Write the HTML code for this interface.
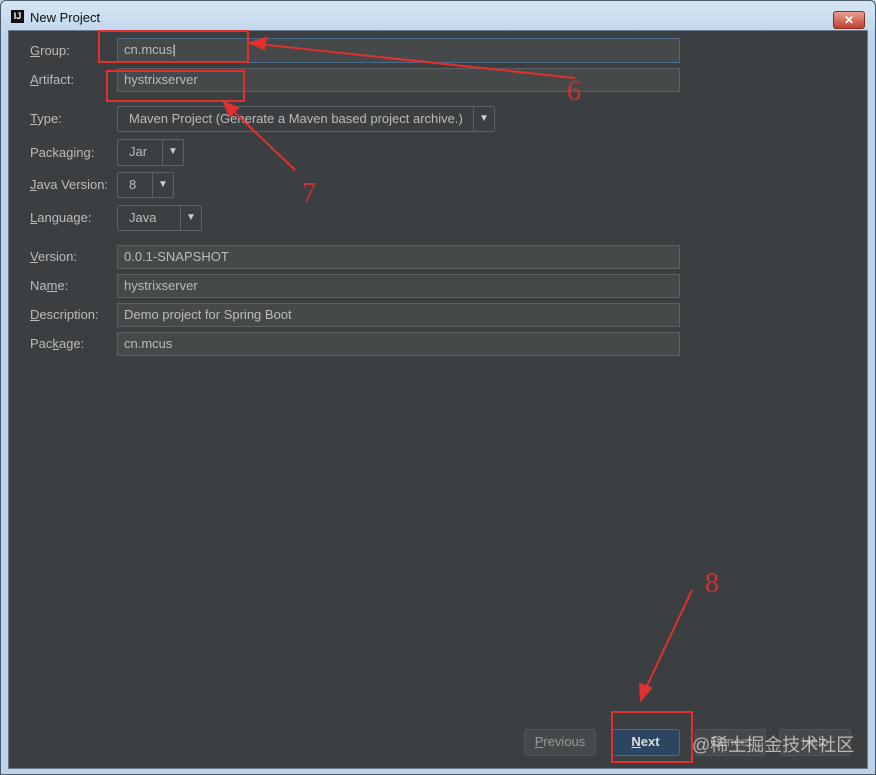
<!DOCTYPE html>
<html><head><style>
body{margin:0;width:876px;height:775px;overflow:hidden;background:#bcd3ea;font-family:"Liberation Sans","Noto Sans CJK SC",sans-serif;position:relative}
.a{position:absolute}
.win{left:0;top:0;width:874px;height:773px;border:1px solid #4a5a6a;background:linear-gradient(#d6e5f3,#bcd3ea 40px);border-radius:6px 6px 0 0}
.content{left:8px;top:30px;width:858px;height:737px;background:#3c3f41;border:1px solid #6a7a8a}
.lbl{color:#bbbbbb;font-size:13px;left:30px}
.f{border:1px solid #5e6163;background:#45494a;color:#bbbbbb;font-size:13px;box-sizing:border-box;padding-left:6px;line-height:22px}
.cb{border:1px solid #5e6163;background:#3c3f41;color:#bbbbbb;font-size:13px;box-sizing:border-box;padding-left:11px;line-height:24px;border-radius:2px}
.arr{position:absolute;right:0;top:0;bottom:0;width:20px;border-left:1px solid #5e6163;text-align:center;font-size:10px;color:#ccc}
.btn{border:1px solid #555;background:#46494b;color:#999;font-size:13px;text-align:center;line-height:24px;box-sizing:border-box;border-radius:3px;height:27px;top:729px}
.red{border:2px solid #e03030;box-sizing:border-box}
.num{color:#d03030;font-family:"Liberation Serif",serif;font-size:28px}
</style></head><body>
<div class="a win"></div>
<div class="a" style="left:11px;top:10px;width:13px;height:13px;background:#111;color:#fff;font-size:9px;font-weight:bold;line-height:13px;text-align:center">IJ</div>
<div class="a" style="left:30px;top:10px;font-size:13px;color:#111">New Project</div>
<div class="a" style="left:833px;top:11px;width:30px;height:16px;background:linear-gradient(#e8a090,#c04030);border:1px solid #803020;border-radius:3px;color:#fff;font-size:12px;font-weight:bold;text-align:center;line-height:16px">✕</div>
<div class="a content"></div>

<div class="a lbl" style="top:43px"><u>G</u>roup:</div>
<div class="a f" style="left:117px;top:38px;width:563px;height:25px;border-color:#4a6a8a">cn.mcus<span style="color:#ddd">|</span></div>
<div class="a lbl" style="top:72px"><u>A</u>rtifact:</div>
<div class="a f" style="left:117px;top:68px;width:563px;height:24px">hystrixserver</div>
<div class="a lbl" style="top:111px"><u>T</u>ype:</div>
<div class="a cb" style="left:117px;top:106px;width:378px;height:26px">Maven Project (Generate a Maven based project archive.)<div class="arr">▼</div></div>
<div class="a lbl" style="top:145px">Packa<u>g</u>ing:</div>
<div class="a cb" style="left:117px;top:139px;width:67px;height:27px">Jar<div class="arr">▼</div></div>
<div class="a lbl" style="top:177px"><u>J</u>ava Version:</div>
<div class="a cb" style="left:117px;top:172px;width:57px;height:26px">8<div class="arr">▼</div></div>
<div class="a lbl" style="top:210px"><u>L</u>anguage:</div>
<div class="a cb" style="left:117px;top:205px;width:85px;height:26px">Java<div class="arr">▼</div></div>

<div class="a lbl" style="top:249px"><u>V</u>ersion:</div>
<div class="a f" style="left:117px;top:245px;width:563px;height:24px">0.0.1-SNAPSHOT</div>
<div class="a lbl" style="top:278px">Na<u>m</u>e:</div>
<div class="a f" style="left:117px;top:274px;width:563px;height:24px">hystrixserver</div>
<div class="a lbl" style="top:307px"><u>D</u>escription:</div>
<div class="a f" style="left:117px;top:303px;width:563px;height:24px">Demo project for Spring Boot</div>
<div class="a lbl" style="top:336px">Pac<u>k</u>age:</div>
<div class="a f" style="left:117px;top:332px;width:563px;height:24px">cn.mcus</div>

<div class="a btn" style="left:524px;width:72px"><u>P</u>revious</div>
<div class="a btn" style="left:611px;width:69px;background:#2c4560;border-color:#4a6a8a;color:#ddd;font-weight:bold"><u>N</u>ext</div>
<div class="a btn" style="left:695px;width:71px">Cancel</div>
<div class="a btn" style="left:779px;width:72px">Help</div>
<div class="a" style="left:692px;top:731px;font-size:18px;color:rgba(220,220,220,.75)">@稀土掘金技术社区</div>

<div class="a red" style="left:98px;top:30px;width:151px;height:33px"></div>
<div class="a red" style="left:106px;top:70px;width:139px;height:32px"></div>
<div class="a red" style="left:611px;top:711px;width:82px;height:52px"></div>
<svg class="a" style="left:0;top:0" width="876" height="775">
<g stroke="#e03030" stroke-width="2" fill="#e03030">
<line x1="575" y1="78" x2="258" y2="44"/><polygon points="250,43 266,38 264,49"/>
<line x1="295" y1="170" x2="230" y2="108"/><polygon points="224,102 238,108 230,116"/>
<line x1="692" y1="590" x2="645" y2="690"/><polygon points="641,700 640,684 651,688"/>
</g></svg>
<div class="a num" style="left:567px;top:76px">6</div>
<div class="a num" style="left:302px;top:178px">7</div>
<div class="a num" style="left:705px;top:568px">8</div>
</body></html>
